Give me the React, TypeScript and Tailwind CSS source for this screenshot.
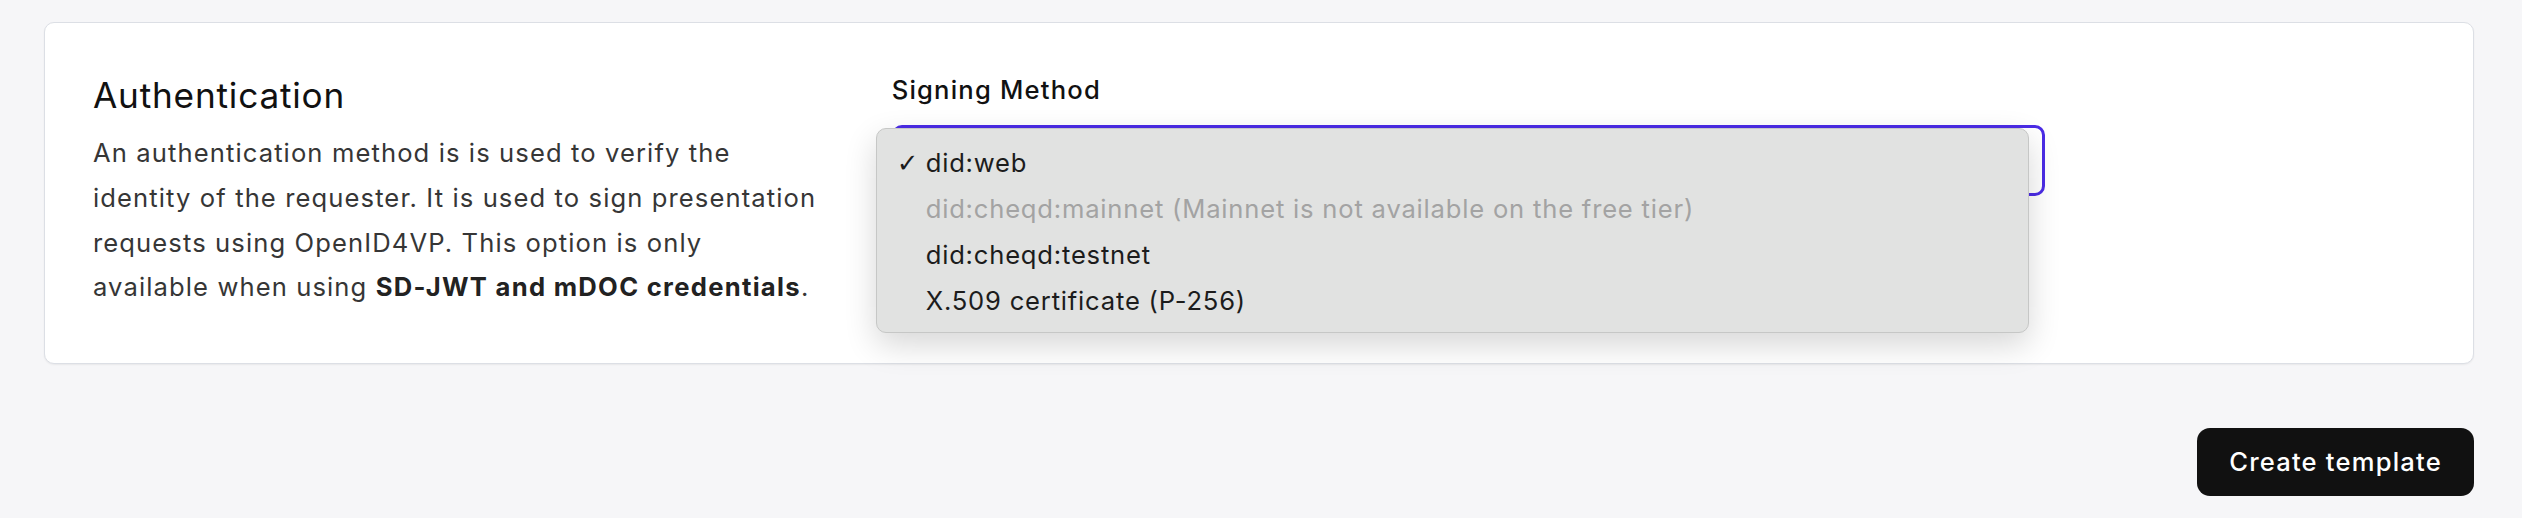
import React from "react";

const items = [
  { label: "did:web", checked: true, disabled: false },
  { label: "did:cheqd:mainnet (Mainnet is not available on the free tier)", checked: false, disabled: true },
  { label: "did:cheqd:testnet", checked: false, disabled: false },
  { label: "X.509 certificate (P-256)", checked: false, disabled: false },
];

export default function App() {
  return (
    <div
      className="min-h-[518px] w-[2522px] bg-[#f6f6f8] pt-[22px] pl-[44px]"
      style={{ fontFamily: "Inter, 'Noto Sans', 'DejaVu Sans', sans-serif" }}
    >
      <div className="w-[2430px] rounded-[10px] border border-[#dcdfe5] bg-white shadow-[0_1px_2px_rgba(0,0,0,0.06)] px-[48px] pt-[48px] pb-[53px]">
        <div className="grid grid-cols-3 gap-x-[64px]">
          <div>
            <h2 className="text-[35.2px] leading-[48px] font-normal tracking-[0.8px] text-[#111111]">
              Authentication
            </h2>
            <p className="mt-[12px] max-w-[728px] text-[25.6px] leading-[44.8px] tracking-[1.1px] text-[#363636]">
              An authentication method is is used to verify the identity of the requester. It is used to sign
              presentation requests using OpenID4VP. This option is only available when using{" "}
              <span className="font-bold tracking-[1.3px] text-[#222]">SD-JWT and mDOC credentials</span>.
            </p>
          </div>
          <div className="col-span-2">
            <label className="block text-[25.6px] leading-[38.4px] font-medium tracking-[1.2px] text-[#111111]">
              Signing Method
            </label>
            <div className="relative mt-[16px] w-[1153px]">
              <div className="flex h-[71px] items-center rounded-[10px] border-[3px] border-[#4b2ce6] bg-white px-[24px] text-[25.6px] text-[#111]">
                did:web
              </div>
              <div className="absolute left-[-16px] top-[3px] w-[1153px] rounded-[10px] border border-[#c6c7c6] bg-[#e1e2e1] pt-[11px] pb-[8px] shadow-[0_12px_32px_rgba(0,0,0,0.16)]">
                {items.map((it) => (
                  <div
                    key={it.label}
                    className={
                      "flex h-[46px] items-center pl-[20px] text-[25.6px] tracking-[0.8px] " +
                      (it.disabled ? "text-[#a3a3a3]" : "text-[#1c1c1c]")
                    }
                  >
                    <span
                      className="w-[29px] text-[26px] font-bold tracking-normal"
                      style={{ fontFamily: "'DejaVu Sans', sans-serif" }}
                    >
                      {it.checked ? "✓" : ""}
                    </span>
                    <span>{it.label}</span>
                  </div>
                ))}
              </div>
            </div>
          </div>
        </div>
      </div>
      <div className="mt-[64px] flex w-[2430px] justify-end">
        <button className="h-[68px] rounded-[13px] bg-[#111111] px-[32px] text-[25.6px] font-medium tracking-[1.2px] text-white">
          Create template
        </button>
      </div>
    </div>
  );
}
